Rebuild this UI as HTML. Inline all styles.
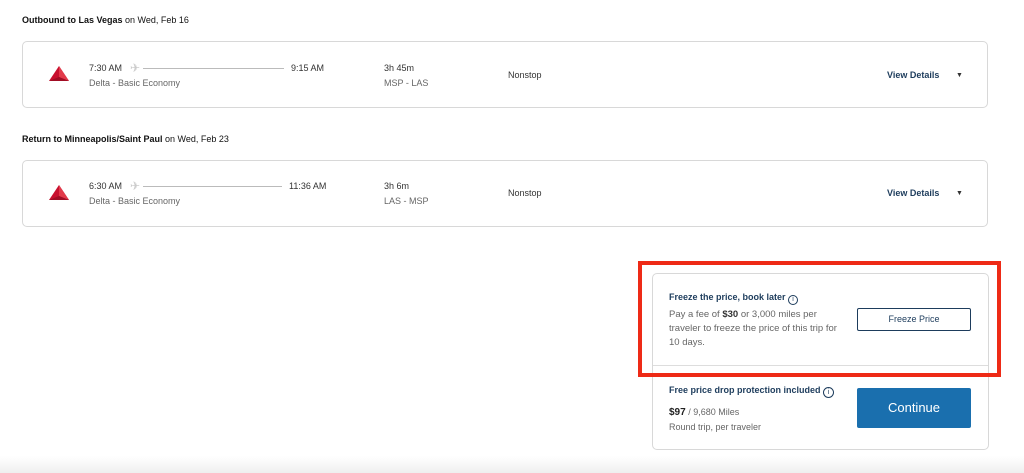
<!DOCTYPE html>
<html><head><style>
*{margin:0;padding:0;box-sizing:border-box}
body{width:1024px;height:473px;background:#fff;font-family:"Liberation Sans",sans-serif;position:relative;overflow:hidden;color:#222}
.a{position:absolute;white-space:nowrap}
.h{font-size:9px;color:#111}
.card{position:absolute;left:22px;width:966px;height:67px;border:1px solid #d8d8d8;border-radius:5px}
.t{font-size:9px;color:#333}
.g{font-size:9px;color:#666}
.vd{font-size:9px;font-weight:bold;color:#1d3c5c}
.line{position:absolute;height:1px;background:#bbb}
</style></head><body>
<div class="a h" style="left:22px;top:15px"><b>Outbound to Las Vegas</b> on Wed, Feb 16</div>
<div class="card" style="top:41px"></div>
<div class="a h" style="left:22px;top:134px"><b>Return to Minneapolis/Saint Paul</b> on Wed, Feb 23</div>
<div class="card" style="top:160px"></div>

<svg class="a" style="left:49px;top:66px" width="20" height="16" viewBox="0 0 20 16"><polygon points="10,0 20,15 0,15" fill="#c8102e"/><polygon points="10,0 20,15 10,11" fill="#e23a4a"/><polygon points="0,15 20,15 10,11" fill="#a00d24"/></svg>
<svg class="a" style="left:49px;top:185px" width="20" height="16" viewBox="0 0 20 16"><polygon points="10,0 20,15 0,15" fill="#c8102e"/><polygon points="10,0 20,15 10,11" fill="#e23a4a"/><polygon points="0,15 20,15 10,11" fill="#a00d24"/></svg>

<div class="a t" style="left:89px;top:63px">7:30 AM</div>
<div class="a g" style="left:89px;top:78px">Delta - Basic Economy</div>
<div class="a" style="left:130px;top:61px;color:#ccc;font-size:12px">✈</div>
<div class="line" style="left:143px;top:68px;width:141px"></div>
<div class="a t" style="left:291px;top:63px">9:15 AM</div>
<div class="a t" style="left:384px;top:63px">3h 45m</div>
<div class="a g" style="left:384px;top:78px">MSP - LAS</div>
<div class="a t" style="left:508px;top:70px">Nonstop</div>
<div class="a vd" style="left:887px;top:70px">View Details</div>
<div class="a" style="left:956px;top:72px;font-size:7px;color:#333">▼</div>

<div class="a t" style="left:89px;top:181px">6:30 AM</div>
<div class="a g" style="left:89px;top:196px">Delta - Basic Economy</div>
<div class="a" style="left:130px;top:179px;color:#ccc;font-size:12px">✈</div>
<div class="line" style="left:143px;top:186px;width:139px"></div>
<div class="a t" style="left:289px;top:181px">11:36 AM</div>
<div class="a t" style="left:384px;top:181px">3h 6m</div>
<div class="a g" style="left:384px;top:196px">LAS - MSP</div>
<div class="a t" style="left:508px;top:188px">Nonstop</div>
<div class="a vd" style="left:887px;top:188px">View Details</div>
<div class="a" style="left:956px;top:190px;font-size:7px;color:#333">▼</div>

<div class="a" style="left:652px;top:273px;width:337px;height:177px;border:1px solid #d8d8d8;border-radius:5px"></div>
<div class="a" style="left:653px;top:365px;width:335px;height:1px;background:#ddd"></div>
<div class="a" style="left:638px;top:261px;width:363px;height:116px;border:4px solid #ee2a16"></div>
<div class="a vd" style="left:669px;top:292px">Freeze the price, book later <span style="display:inline-block;width:10px;height:10px;border:1px solid #1d3c5c;border-radius:50%;font-size:7px;text-align:center;line-height:8px;font-weight:normal;vertical-align:-1px">i</span></div>
<div class="a g" style="left:669px;top:308px;line-height:14px;white-space:normal;width:172px;font-size:9.5px">Pay a fee of <b style="color:#333">$30</b> or 3,000 miles per traveler to freeze the price of this trip for 10 days.</div>
<div class="a" style="left:857px;top:308px;width:114px;height:23px;border:1px solid #1d3c5c;border-radius:2px;font-size:9px;color:#1d3c5c;text-align:center;line-height:21px">Freeze Price</div>
<div class="a vd" style="left:669px;top:385px">Free price drop protection included <span style="display:inline-block;width:11px;height:11px;border:1px solid #1d3c5c;border-radius:50%;font-size:7px;text-align:center;line-height:9px;font-weight:normal;vertical-align:-1px">i</span></div>
<div class="a g" style="left:669px;top:407px"><b style="color:#222;font-size:10px">$97</b> / 9,680 Miles</div>
<div class="a g" style="left:669px;top:422px">Round trip, per traveler</div>
<div class="a" style="left:857px;top:388px;width:114px;height:40px;background:#1a6fae;border-radius:2px;color:#fff;font-size:13px;text-align:center;line-height:40px">Continue</div>
<div class="a" style="left:0;top:456px;width:1024px;height:17px;background:linear-gradient(#fff,#efefef)"></div>
</body></html>
